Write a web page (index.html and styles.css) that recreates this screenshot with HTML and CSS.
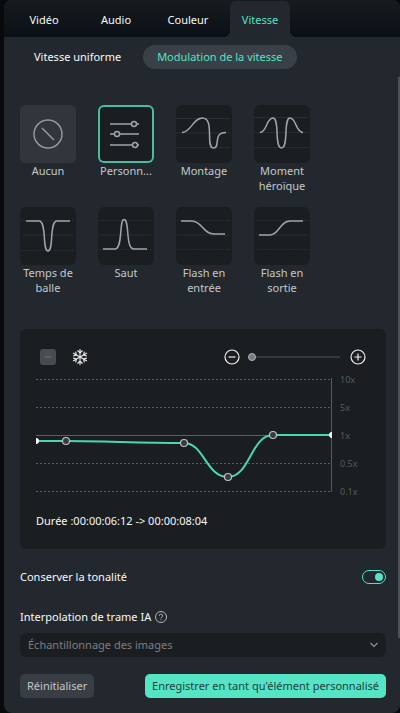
FILE: index.html
```html
<!DOCTYPE html>
<html lang="fr">
<head>
    <meta charset="UTF-8">
    <meta name="viewport" content="width=device-width, initial-scale=1.0">
    <title>Vitesse</title>
    <link rel="stylesheet" href="styles.css">
</head>
<body>
    <div class="panel">
        <nav class="tabs">
            <button class="tab">Vidéo</button>
            <button class="tab">Audio</button>
            <button class="tab">Couleur</button>
            <button class="tab active">Vitesse</button>
        </nav>

        <main class="content">
            <div class="subtabs">
                <button class="subtab">Vitesse uniforme</button>
                <button class="subtab active">Modulation de la vitesse</button>
            </div>

            <div class="presets">
                <button class="preset">
                    <svg class="tile none" viewBox="0 0 56 58">
                        <circle cx="28" cy="29" r="14"/>
                        <path d="M22 23l12 12"/>
                    </svg>
                    <span>Aucun</span>
                </button>
                <button class="preset selected">
                    <svg class="tile" viewBox="0 0 56 58">
                        <path d="M12 19h21M39 19h2M12 29h4M22 29h19M12 40h22M40 40h1"/>
                        <circle cx="36" cy="19" r="2.5"/>
                        <circle cx="19" cy="29" r="2.5"/>
                        <circle cx="37" cy="40" r="2.5"/>
                    </svg>
                    <span>Personn...</span>
                </button>
                <button class="preset">
                    <svg class="tile" viewBox="0 0 56 58">
                        <path class="guide" d="M0 13.5h54M0 28h54M0 42.5h54"/>
                        <path d="M6 27.5C15 27.5 17 13 26.5 13C39 13 29 43 37.5 43C45 43 36 27.5 50 27.5"/>
                    </svg>
                    <span>Montage</span>
                </button>
                <button class="preset">
                    <svg class="tile" viewBox="0 0 56 58">
                        <path class="guide" d="M0 12.5h54M0 27.5h54M0 42.5h54"/>
                        <path d="M6 27.5C13 27.5 12 13 19 13C26 13 20 43 27.5 43C35 43 29 13 36 13C42 13 42 27.5 49 27.5"/>
                    </svg>
                    <span>Moment héroïque</span>
                </button>
                <button class="preset">
                    <svg class="tile" viewBox="0 0 56 58">
                        <path class="guide" d="M2 28h52"/>
                        <path class="guide dots" d="M1 13.5h54M1 43.5h54"/>
                        <path d="M6 14H19C27 14 22 44 28 44C34 44 29 14 37 14H50"/>
                    </svg>
                    <span>Temps de balle</span>
                </button>
                <button class="preset">
                    <svg class="tile" viewBox="0 0 56 58">
                        <path class="guide" d="M1 28h52"/>
                        <path class="guide dots" d="M1 13.5h54M1 42.5h54"/>
                        <path d="M5 42H17C25 42 21 12.5 26 12.5C32 12.5 27 42 36 42H49"/>
                    </svg>
                    <span>Saut</span>
                </button>
                <button class="preset">
                    <svg class="tile" viewBox="0 0 56 58">
                        <path class="guide" d="M1 28h52"/>
                        <path class="guide dots" d="M1 13.5h53M1 42.5h53"/>
                        <path d="M5 14H16C26 14 27 27 38 27H49"/>
                    </svg>
                    <span>Flash en entrée</span>
                </button>
                <button class="preset">
                    <svg class="tile" viewBox="0 0 56 58">
                        <path class="guide" d="M1 28h52"/>
                        <path class="guide dots" d="M1 13.5h53M1 42.5h53"/>
                        <path d="M5 28H16C25 28 26 14 36 14H49"/>
                    </svg>
                    <span>Flash en sortie</span>
                </button>
            </div>

            <section class="graph">
                <div class="toolbar">
                    <button class="icon-button" aria-label="Supprimer le point" disabled>
                        <svg width="16" height="16" viewBox="0 0 16 16">
                            <rect width="16" height="16" rx="3" fill="#484c50"/>
                            <path d="M4.5 8h7" stroke="#64686c" stroke-width="1.5"/>
                        </svg>
                    </button>
                    <button class="icon-button" aria-label="Arrêt sur image">
                        <svg width="16" height="16" viewBox="0 0 16 16" fill="none" stroke="#eceded" stroke-width="1.1">
                            <g id="arm">
                                <path d="M8 0V16M5.5 1.5L8 4l2.5-2.5M5.5 14.5L8 12l2.5 2.5"/>
                            </g>
                            <use href="#arm" transform="rotate(60 8 8)"/>
                            <use href="#arm" transform="rotate(120 8 8)"/>
                        </svg>
                    </button>
                    <div class="zoom">
                        <button class="icon-button" aria-label="Zoom arrière">
                            <svg width="16" height="16" viewBox="0 0 16 16" fill="none" stroke="#f0f0f0" stroke-width="1.2">
                                <circle cx="8" cy="8" r="7"/>
                                <path d="M4.5 8h7"/>
                            </svg>
                        </button>
                        <input class="slider" type="range" min="0" max="100" value="0" aria-label="Zoom">
                        <button class="icon-button" aria-label="Zoom avant">
                            <svg width="16" height="16" viewBox="0 0 16 16" fill="none" stroke="#f0f0f0" stroke-width="1.2">
                                <circle cx="8" cy="8" r="7"/>
                                <path d="M4.5 8h7M8 4.5v7"/>
                            </svg>
                        </button>
                    </div>
                </div>

                <svg class="chart" viewBox="0 0 334 128">
                    <path class="grid dashed" d="M0 8.5H295M0 36.5H295M0 92.5H295M0 120.5H295"/>
                    <path class="grid" d="M0 64.5H295"/>
                    <path class="playhead" d="M295.5 7V121"/>
                    <path class="curve" d="M0 70H30C70 70 100 72 148 72C168 72 170 106 192 106C214 106 215 64 237 64H295"/>
                    <path class="end" d="M0 67a3 3 0 0 1 0 6zM296 61a3 3 0 0 0 0 6z"/>
                    <circle class="point" cx="30" cy="70" r="3.5"/>
                    <circle class="point" cx="148" cy="72" r="3.5"/>
                    <circle class="point" cx="192" cy="106" r="3.5"/>
                    <circle class="point" cx="237" cy="64" r="3.5"/>
                    <text x="304" y="12">10x</text>
                    <text x="304" y="40">5x</text>
                    <text x="304" y="68">1x</text>
                    <text x="304" y="96">0.5x</text>
                    <text x="304" y="124">0.1x</text>
                </svg>

                <p class="duration">Durée :00:00:06:12 -&gt; 00:00:08:04</p>
            </section>

            <div class="row">
                <label for="pitch">Conserver la tonalité</label>
                <input class="switch" id="pitch" type="checkbox" checked>
            </div>

            <div class="field">
                <div class="field-label">
                    <label for="interpolation">Interpolation de trame IA</label>
                    <svg width="12" height="12" viewBox="0 0 12 12" fill="none" stroke="#b4b7ba">
                        <circle cx="6" cy="6" r="5.5"/>
                        <path d="M4.3 4.8a1.7 1.6 0 1 1 2.5 1.3q-.8.4-.8 1.1M6 8.3v1"/>
                    </svg>
                </div>
                <div class="select">
                    <select id="interpolation">
                        <option>Échantillonnage des images</option>
                    </select>
                    <svg width="10" height="6" viewBox="0 0 10 6" fill="none" stroke="#8f9396" stroke-width="1.2">
                        <path d="M1.5 1L5 4.5 8.5 1"/>
                    </svg>
                </div>
            </div>
            <div class="scrollbar"></div>
        </main>

        <footer class="footer">
            <button class="button">Réinitialiser</button>
            <button class="button primary">Enregistrer en tant qu'élément personnalisé</button>
        </footer>
    </div>
</body>
</html>
```
FILE: styles.css
```css
* {
    box-sizing: border-box;
}
body {
    margin: 0;
    padding-left: 4px;
    background-color: #07090b;
    color: #f8f8f8;
    font-family: "Noto Sans", "Open Sans", sans-serif;
    font-size: 11px;
    line-height: 16px;
}
button, select {
    font: inherit;
    color: inherit;
    border: 0;
    padding: 0;
    background: none;
    cursor: pointer;
}
.panel {
    display: flex;
    flex-direction: column;
    min-height: 100vh;
    background-color: #22282e;
    border-radius: 8px;
    overflow: hidden;
}

/* main tabs */
.tabs {
    display: flex;
    height: 37px;
    padding: 1px 4px 0;
    background: linear-gradient(#171b1e, #0a1017);
}
.tab {
    width: 60px;
    margin: 0 6px;
    padding-top: 1px;
}
.tab.active {
    position: relative;
    color: #50e3c2;
    background-color: #22282e;
    border-radius: 6px 6px 0 0;
}
.tab.active::before, .tab.active::after {
    content: "";
    position: absolute;
    bottom: 0;
    width: 6px;
    height: 6px;
}
.tab.active::before {
    right: 100%;
    background: radial-gradient(circle at 0 0, transparent 6px, #22282e 6px);
}
.tab.active::after {
    left: 100%;
    background: radial-gradient(circle at 100% 0, transparent 6px, #22282e 6px);
}

.content {
    position: relative;
    flex: 1;
    padding: 8px 14px 0 16px;
}
.subtabs {
    display: flex;
    gap: 8px;
}
.subtab {
    height: 24px;
    padding: 0 14px;
    border-radius: 12px;
}
.subtab.active {
    color: #50e3c2;
    background-color: #3a4047;
}

/* speed presets */
.presets {
    display: grid;
    grid-template-columns: repeat(auto-fill, 56px);
    gap: 14px 22px;
    margin: 36px 22px 0 0;
}
.preset {
    display: flex;
    flex-direction: column;
    align-items: center;
    min-height: 88px;
    color: #c3c8cb;
    line-height: 15px;
}
.tile {
    width: 56px;
    height: 58px;
    flex: none;
    border-radius: 6px;
    background-color: #1a1e20;
    fill: none;
    stroke: #a2a5a7;
    stroke-width: 1.5;
}
.tile.none {
    background-color: #30363b;
    stroke: #93979b;
}
.tile .guide {
    stroke: #292d30;
    stroke-width: 1;
}
.tile .dots {
    stroke-dasharray: 2 1;
}
.selected .tile {
    box-shadow: inset 0 0 0 2px #47bea4;
}

/* speed curve */
.graph {
    margin-top: 34px;
    padding: 20px 16px;
    background-color: #1a1e20;
    border-radius: 6px;
}
.toolbar {
    display: flex;
    align-items: center;
    gap: 16px;
    padding: 0 4px;
}
.icon-button {
    width: 16px;
    height: 16px;
}
.icon-button svg {
    display: block;
}
.zoom {
    display: flex;
    align-items: center;
    gap: 8px;
    margin-left: auto;
}
.slider {
    appearance: none;
    width: 92px;
    height: 8px;
    margin: 0 2px 0 0;
    background: linear-gradient(#33373e, #33373e) center / 100% 2px no-repeat;
}
.slider::-webkit-slider-thumb {
    appearance: none;
    width: 8px;
    height: 8px;
    border: 1px solid #b0b4bb;
    border-radius: 50%;
    background-color: #737b86;
}
.chart {
    display: block;
    width: 100%;
    margin-top: 6px;
}
.grid {
    fill: none;
    stroke: #5b5e60;
}
.dashed {
    stroke-dasharray: 2 2;
}
.playhead {
    stroke: #8c4545;
}
.curve {
    fill: none;
    stroke: #48d6b3;
    stroke-width: 2;
}
.end {
    fill: #fff;
}
.point {
    fill: #353b40;
    stroke: #c0c3c5;
    stroke-width: 1.2;
}
.chart text {
    fill: #565b5f;
    font-size: 9px;
}
.duration {
    margin: 14px 0 0;
}

.row {
    display: flex;
    align-items: center;
    justify-content: space-between;
    margin-top: 20px;
}
.switch {
    appearance: none;
    display: flex;
    align-items: center;
    justify-content: flex-end;
    width: 24px;
    height: 14px;
    margin: 0;
    padding: 0 2px;
    border: 1px solid #50e3c2;
    border-radius: 7px;
}
.switch::before {
    content: "";
    width: 8px;
    height: 8px;
    border-radius: 50%;
    background-color: #55e5c5;
}
.switch:not(:checked) {
    justify-content: flex-start;
}
.field {
    margin-top: 24px;
}
.field-label {
    display: flex;
    align-items: center;
    gap: 4px;
}
.select {
    position: relative;
    margin-top: 8px;
}
.select select {
    appearance: none;
    display: block;
    width: 100%;
    height: 24px;
    padding: 0 8px;
    color: #7b7f82;
    background-color: #1b1e21;
    border-radius: 6px;
}
.select svg {
    position: absolute;
    right: 7px;
    top: 9px;
    pointer-events: none;
}
.scrollbar {
    position: absolute;
    top: 40px;
    right: 0;
    bottom: 19px;
    width: 2px;
    background-color: #4b5156;
}

.footer {
    display: flex;
    justify-content: space-between;
    padding: 17px 14px 15px 16px;
}
.button {
    height: 24px;
    padding: 0 7px;
    border-radius: 5px;
    color: #c3c8cb;
    background-color: #383e44;
}
.button.primary {
    color: #22403f;
    background-color: #55e5c5;
}
```
